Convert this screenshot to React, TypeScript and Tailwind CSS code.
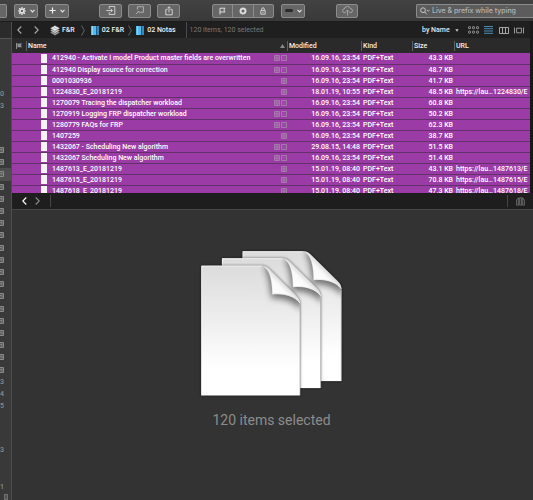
import { useState } from "react";
import type { ReactNode } from "react";

type Doc = {
  name: string;
  modified: string;
  size: string;
  url?: string;
  both: boolean;
};

const docs: Doc[] = [
  { name: "412940 - Activate I model Product master fields are overwritten", modified: "16.09.16, 23:54", size: "43.3 KB", both: true },
  { name: "412940 Display source for correction", modified: "16.09.16, 23:54", size: "48.7 KB", both: true },
  { name: "0001030936", modified: "16.09.16, 23:54", size: "41.7 KB", both: false },
  { name: "1224830_E_20181219", modified: "18.01.19, 10:55", size: "48.5 KB", url: "https://lau…1224830/E", both: false },
  { name: "1270079 Tracing the dispatcher workload", modified: "16.09.16, 23:54", size: "60.8 KB", both: true },
  { name: "1270919 Logging FRP dispatcher workload", modified: "16.09.16, 23:54", size: "50.2 KB", both: true },
  { name: "1280779 FAQs for FRP", modified: "16.09.16, 23:54", size: "62.3 KB", both: true },
  { name: "1407259", modified: "16.09.16, 23:54", size: "38.7 KB", both: false },
  { name: "1432067 - Scheduling New algorithm", modified: "29.08.15, 14:48", size: "51.5 KB", both: true },
  { name: "1432067 Scheduling New algorithm", modified: "16.09.16, 23:54", size: "51.4 KB", both: true },
  { name: "1487613_E_20181219", modified: "15.01.19, 08:40", size: "43.1 KB", url: "https://lau…1487613/E", both: false },
  { name: "1487615_E_20181219", modified: "15.01.19, 08:40", size: "70.8 KB", url: "https://lau…1487615/E", both: false },
  { name: "1487618_E_20181219", modified: "15.01.19, 08:40", size: "47.3 KB", url: "https://lau…1487618/E", both: false },
];

// "" is an empty row, "-" a short gap between sections, "icon" a group without a count
const sidebarRows: string[] = [
  "", "", "", "", "0", "3", "", "", "-",
  ...Array(19).fill("icon"),
  "3", "4", "5", "", "", "-", "3", "", "", "1", "-",
];
const activeRow = 11;

// ------------------------------
// Icons
// ------------------------------

const Chevron = () => (
  <svg width="5" height="4" viewBox="0 0 5 4" fill="none" stroke="#e6e6e6" strokeWidth="1.1">
    <path d="M.5 .8 2.5 2.9 4.5 .8" />
  </svg>
);

const Gear = () => (
  <svg width="8" height="8" viewBox="0 0 16 16" fill="none" stroke="#e8e8e8">
    <circle cx="8" cy="8" r="4" strokeWidth="3" />
    <path d="M8 0v3M8 13v3M0 8h3M13 8h3M2.3 2.3l2.2 2.2M11.5 11.5l2.2 2.2M2.3 13.7l2.2-2.2M11.5 4.5l2.2-2.2" strokeWidth="2.4" />
  </svg>
);

const Plus = () => (
  <svg width="7" height="7" viewBox="0 0 7 7" stroke="#f0f0f0" strokeWidth="1.2">
    <path d="M3.5 .4v6.2M.4 3.5h6.2" />
  </svg>
);

const ImportIcon = () => (
  <svg width="10" height="9" viewBox="0 0 10 9" fill="none" stroke="#d8d8d8" strokeWidth=".9">
    <path d="M3.2 2.8V.5h5.6v8H3.2V6.2M.3 4.5h6M4.7 2.8l1.8 1.7-1.8 1.7" />
  </svg>
);

const MoveIcon = () => (
  <svg width="9" height="9" viewBox="0 0 9 9" fill="none" stroke="#b8b8b8" strokeWidth=".9">
    <path d="M2.4 3.6V.7h6v5.6H5.2" />
    <path d="M.8 8.2 3.6 5.4" />
    <path d="M2.4 5.6h1.8v1.8" strokeWidth=".7" />
  </svg>
);

const ShareIcon = () => (
  <svg width="8" height="10" viewBox="0 0 8 10" fill="none" stroke="#dcdcdc" strokeWidth=".9">
    <path d="M2.4 3.6H.8v5.2h6.4V3.6H5.6M4 6.4V.8M2.3 2.4 4 .7l1.7 1.7" />
  </svg>
);

const FlagIcon = () => (
  <svg width="7" height="8" viewBox="0 0 7 8" fill="none" stroke="#dedede" strokeWidth="1">
    <path d="M1 7.5V1.2h5L4.9 3.1 6 5H1" />
  </svg>
);

const DotIcon = () => (
  <svg width="8" height="8" viewBox="0 0 8 8" fill="none" stroke="#dedede">
    <circle cx="4" cy="4" r="2.4" strokeWidth="1.7" />
    <circle cx="4" cy="4" r="3.5" strokeWidth=".5" strokeDasharray="1 .8" />
  </svg>
);

const LockIcon = () => (
  <svg width="6" height="8" viewBox="0 0 6 8" fill="none" stroke="#dedede" strokeWidth=".9">
    <path d="M.8 3.6h4.4v3.6H.8zM1.7 3.6V2.1a1.3 1.3 0 0 1 2.6 0v1.5M3 4.8v1.2" />
  </svg>
);

const CloudIcon = () => (
  <svg width="11" height="10" viewBox="0 0 11 10" fill="none" stroke="#b4b4b4" strokeWidth=".8">
    <path d="M3.8 6.6H2.5a1.9 1.9 0 0 1-.1-3.8 3.1 3.1 0 0 1 6-.2 2 2 0 0 1 .1 4H7.2M5.5 9.5V4.2M4 5.6l1.5-1.5L7 5.6" />
  </svg>
);

const StackIcon = () => (
  <svg width="10" height="11" viewBox="0 0 20 22">
    <path d="M0 15l10-4 10 4-10 6z" fill="#a8a8a8" stroke="#333" />
    <path d="M0 11l10-5 10 5-10 6z" fill="#cfcfcf" stroke="#333" />
    <path d="M0 6.5 10 1l10 5.5-10 6z" fill="#f4f4f4" stroke="#333" />
    <path d="M5 6.5h10M8 4.5l5 4" stroke="#999" />
  </svg>
);

const FolderIcon = () => (
  <svg width="8" height="9" viewBox="0 0 8 9">
    <rect width="5" height="9" fill="#55b9ee" />
    <rect x="1" width="1" height="9" fill="#8ad4f8" />
    <rect x="5" width="1" height="9" fill="#1f5f8c" />
    <rect x="6" width="2" height="9" fill="#3789b8" />
  </svg>
);

const Separator = () => (
  <svg width="4" height="11" viewBox="0 0 4 11" fill="none" stroke="#777" strokeWidth=".8">
    <path d="M.5 .5 3.3 5.5.5 10.5" />
  </svg>
);

const Arrow = ({ left, color }: { left?: boolean; color: string }) => (
  <svg width="5" height="8" viewBox="0 0 5 8" fill="none" stroke={color} strokeWidth="1.1">
    <path d={left ? "M4.3.5.8 4l3.5 3.5" : "M.7.5 4.2 4 .7 7.5"} />
  </svg>
);

const IconsView = () => (
  <svg width="11" height="8" viewBox="0 0 11 8" fill="none" stroke="#b0b0b0" strokeWidth=".8">
    {[0, 4, 8].map((x) => [0, 4.5].map((y) => <rect key={`${x}-${y}`} x={x + 0.5} y={y + 0.6} width="2" height="2.1" rx=".6" />))}
  </svg>
);

const ListView = () => (
  <svg width="9" height="8" viewBox="0 0 9 8" stroke="#4c8cb8" strokeWidth="1">
    <path d="M0 .5h9M0 2.7h9M0 5h9M0 7.3h9" />
  </svg>
);

const ColumnsView = () => (
  <svg width="10" height="7" viewBox="0 0 10 7" fill="none" stroke="#b5b5b5" strokeWidth=".9">
    <path d="M.5.5h9v6h-9zM3.5.5v6M6.5.5v6" />
  </svg>
);

const CoverView = () => (
  <svg width="10" height="7" viewBox="0 0 10 7" fill="none" stroke="#a8a8a8" strokeWidth=".9">
    <path d="M2.6 1.2h4.8v4.6H2.6zM.5.5v6M9.5.5v6" />
  </svg>
);

const Badge = ({ lines }: { lines?: boolean }) => (
  <svg width="6" height="6" viewBox="0 0 6 6" fill="none" stroke="#a58aa8" strokeWidth=".8">
    <path d="M.5.5h5v5h-5z" />
    <path d={lines ? "M1 2.2h4M1 3.9h4M3 .5v5" : "M1 3h4M3 1v4"} strokeWidth={lines ? ".8" : ".3"} />
  </svg>
);

const Page = ({ x, y }: { x: number; y: number }) => (
  <g transform={`translate(${x} ${y})`}>
    <path d="M33 78H215C226 78 233 84 241 92L318 168C326 176 329 182 329 194V467H33Z" fill="#111" opacity=".6" filter="url(#soft)" />
    <path d="M33 78H215C226 78 233 84 241 92L318 168C326 176 329 182 329 194V467H33Z" fill="url(#paper)" />
    <path d="M34 467V79H215M34 466H328" fill="none" stroke="#fff" strokeWidth="2" />
    <g clipPath="url(#sheet)">
      <path d="M222 84C236 105 238 140 244 176C278 174 312 186 334 212V150L240 70Z" fill="#000" opacity=".5" filter="url(#curlShadow)" />
    </g>
    <path d="M218 79C240 92 245 125 246 163C280 160 312 168 329 190C328 180 323 173 318 168L241 92C234 84 227 79 218 79Z" fill="url(#curl)" stroke="#c8c8c8" strokeWidth="1" />
    <path d="M246 163C280 160 312 168 329 190" fill="none" stroke="#fff" strokeWidth="2" />
    <path d="M329 194V467" stroke="#aaa" strokeWidth="2" />
  </g>
);

const PaperStack = () => (
  <svg width="150" height="152" viewBox="20 25 450 456">
    <defs>
      <linearGradient id="paper" x1="0" y1="0" x2="0" y2="1">
        <stop offset="0" stopColor="#dcdcdc" />
        <stop offset=".4" stopColor="#ededed" />
        <stop offset=".8" stopColor="#ffffff" />
      </linearGradient>
      <linearGradient id="curl" gradientUnits="userSpaceOnUse" x1="246" y1="163" x2="283" y2="126">
        <stop offset="0" stopColor="#ffffff" />
        <stop offset=".6" stopColor="#fafafa" />
        <stop offset="1" stopColor="#d4d4d4" />
      </linearGradient>
      <filter id="soft"><feGaussianBlur stdDeviation="4" /></filter>
      <filter id="curlShadow" x="-30%" y="-30%" width="160%" height="160%"><feGaussianBlur stdDeviation="9" /></filter>
      <clipPath id="sheet"><path d="M33 78H215C226 78 233 84 241 92L318 168C326 176 329 182 329 194V467H33Z" /></clipPath>
    </defs>
    <Page x={124} y={-43} />
    <Page x={62} y={-22} />
    <Page x={0} y={0} />
  </svg>
);

// ------------------------------
// Parts
// ------------------------------

const ToolButton = ({ label, className, children }: { label: string; className: string; children?: ReactNode }) => (
  <button
    aria-label={label}
    className={`flex h-[14px] shrink-0 items-center justify-center gap-1 rounded-[2px] border border-[#8c8c8c] bg-[#666666] ${className}`}
  >
    {children}
  </button>
);

const Toolbar = () => (
  <header className="flex h-[22px] items-center overflow-hidden border-b border-[#1c1c1c] bg-linear-to-b from-[#424242] to-[#393939]">
    <ToolButton label="Back" className="w-[7px] rounded-l-none border-l-0" />
    <ToolButton label="Actions" className="ml-[7px] w-6"><Gear /><Chevron /></ToolButton>
    <ToolButton label="Add" className="ml-[7px] w-6"><Plus /><Chevron /></ToolButton>
    <ToolButton label="Import" className="ml-[30px] w-[23px]"><ImportIcon /></ToolButton>
    <ToolButton label="Move" className="ml-[6px] w-[23px]"><MoveIcon /></ToolButton>
    <ToolButton label="Share" className="ml-[6px] w-[23px]"><ShareIcon /></ToolButton>
    <div className="ml-8 flex h-[14px] w-[62px] shrink-0 divide-x divide-[#8c8c8c] rounded-[2px] border border-[#8c8c8c] bg-[#666666]">
      <button aria-label="Flag" className="flex flex-1 items-center justify-center"><FlagIcon /></button>
      <button aria-label="Unread" className="flex flex-1 items-center justify-center"><DotIcon /></button>
      <button aria-label="Lock" className="flex flex-1 items-center justify-center"><LockIcon /></button>
    </div>
    <ToolButton label="Label" className="ml-[7px] w-6">
      <span className="h-[3px] w-2 rounded-full bg-[#2b2b2b]" />
      <Chevron />
    </ToolButton>
    <ToolButton label="Sync" className="ml-[31px] w-[22px]"><CloudIcon /></ToolButton>
    <label className="ml-[58px] flex h-[14px] flex-1 items-center rounded-l-[2px] border border-r-0 border-[#8c8c8c] bg-[#5c5c5c] pl-[3px]">
      <svg width="10" height="8" viewBox="0 0 10 8" className="shrink-0" fill="none" stroke="#d0d0d0" strokeWidth=".9">
        <circle cx="3" cy="3.2" r="2.4" />
        <path d="M4.7 5 6.8 7.3M7 3.1l1.2 1.2 1.2-1.2" />
      </svg>
      <input
        aria-label="Search"
        placeholder="Live & prefix while typing"
        className="ml-[2px] w-full min-w-0 bg-transparent font-['Inter','Liberation_Sans',sans-serif] text-[7px] leading-[10px] text-white outline-none placeholder:text-[#b4b4b4] placeholder:opacity-100"
      />
    </label>
  </header>
);

const Sidebar = () => (
  <aside className="flex w-3 shrink-0 flex-col border-r border-[#4e4e4e] bg-[#393939]">
    <div className="h-[17px] border-b border-[#565656] bg-[#2b2b2b]" />
    <ul className="flex flex-1 flex-col text-[7px] leading-3 text-[#8c8c8c]">
      {sidebarRows.map((row, i) => (
        <li
          key={i}
          className={`flex items-center justify-end ${row === "-" ? "flex-[3]" : "flex-[5]"} ${i === activeRow ? "bg-[#4f4f4f]" : ""} ${row === "-" ? "pr-[3px]" : "pr-[7px]"}`}
        >
          {row === "icon" ? (
            <svg width="6" height="6" viewBox="0 0 6 6" className="shrink-0" fill="#5c5c5c" stroke="#8a8a8a" strokeWidth="1">
              <path d="M.5.5h5v5h-5z" />
              <path d="M2 2.5h2v1.5" strokeWidth=".8" fill="none" />
            </svg>
          ) : row !== "-" && row}
          {i === sidebarRows.length - 1 && <span className="h-[6px] w-1 shrink-0 border border-[#707070] bg-[#555555]" />}
        </li>
      ))}
    </ul>
  </aside>
);

const PathBar = () => {
  const [sort, setSort] = useState("by Name");

  return (
    <nav className="flex h-4 items-center overflow-hidden bg-[#1f1f1f] pr-[6px] pl-[5px] whitespace-nowrap text-[#f0f0f0]">
      <button aria-label="Back"><Arrow left color="#a8a8a8" /></button>
      <button aria-label="Forward" className="ml-3"><Arrow color="#a8a8a8" /></button>
      <a href="#database" className="ml-[11px] flex items-center gap-[2px]"><StackIcon />F&amp;R</a>
      <span className="mx-[6px]"><Separator /></span>
      <a href="#group" className="flex items-center gap-[3px]"><FolderIcon />02 F&amp;R</a>
      <span className="mx-1"><Separator /></span>
      <a href="#notes" className="flex items-center gap-[3px]"><FolderIcon />02 Notas</a>
      <span className="ml-[10px] flex h-4 items-center border-l border-[#4a4a4a] pl-[3px] font-normal text-[#787878]">120 items, 120 selected</span>
      <label className="ml-auto flex items-center">
        <select
          aria-label="Sort"
          value={sort}
          onChange={(e) => setSort(e.target.value)}
          className="w-[33px] appearance-none bg-transparent text-[#e6e6e6] outline-none"
        >
          <option>by Name</option>
          <option>by Size</option>
        </select>
        <svg width="4" height="3" viewBox="0 0 4 3" fill="#d0d0d0"><path d="M.3.3h3.4L2 2.7z" /></svg>
      </label>
      <button aria-label="Icons" className="ml-[9px]"><IconsView /></button>
      <button aria-label="List" className="ml-[5px]"><ListView /></button>
      <button aria-label="Columns" className="ml-[6px]"><ColumnsView /></button>
      <button aria-label="Cover Flow" className="ml-[5px]"><CoverView /></button>
    </nav>
  );
};

const DocTable = () => (
  <div className="max-h-[155px] overflow-hidden">
    <table className="w-full table-fixed border-collapse whitespace-nowrap">
      <colgroup>
        <col className="w-[14px]" />
        <col />
        <col className="w-[74px]" />
        <col className="w-[51px]" />
        <col className="w-[42px]" />
        <col className="w-[76px]" />
      </colgroup>
      <thead className="bg-[#2a2a2a] text-left text-[#f0f0f0]">
        <tr className="h-[15px]">
          <th aria-label="Flag" className="p-0 pl-1">
            <svg width="6" height="6" viewBox="0 0 6 6" fill="#8f8f8f"><path d="M0 0h1v6H0zM1.4.4H6L5 2.3l1 1.9H1.4z" /></svg>
          </th>
          <th className="p-0 font-medium">
            <div className="flex items-center justify-between border-l border-[#606060] pr-[2px] pl-px">
              Name
              <svg width="5" height="4" viewBox="0 0 5 4" fill="#8a8a8a"><path d="M2.5 0 5 4H0z" /></svg>
            </div>
          </th>
          <th className="p-0 font-medium"><div className="border-l border-[#606060] pl-px">Modified</div></th>
          <th className="p-0 font-medium"><div className="border-l border-[#606060] pl-px">Kind</div></th>
          <th className="p-0 font-medium"><div className="border-l border-[#606060] pl-px">Size</div></th>
          <th className="p-0 font-medium"><div className="border-l border-[#606060] pl-px">URL</div></th>
        </tr>
      </thead>
      <tbody className="bg-[#9b3ba5] text-white">
        {docs.map((doc) => (
          <tr key={doc.name} className="h-[11px] border-b border-[#63306a]">
            <td className="p-0" />
            <td className="p-0 pl-[15px]">
              <div className="flex items-center">
                <span className="h-[9px] w-[6px] shrink-0 bg-[#f4f4f4]" />
                <span className="ml-[5px] flex-1 truncate">{doc.name}</span>
                <span className="flex gap-px">
                  {doc.both && <Badge lines />}
                  <Badge lines={!doc.both} />
                </span>
              </div>
            </td>
            <td className="p-0 pr-px text-right">{doc.modified}</td>
            <td className="p-0 pl-[2px]">PDF+Text</td>
            <td className="p-0 pr-px text-right">{doc.size}</td>
            <td className="overflow-hidden p-0 pl-[2px]">{doc.url}</td>
          </tr>
        ))}
      </tbody>
    </table>
  </div>
);

export default function App() {
  return (
    <div className="flex min-h-screen flex-col bg-[#333333] font-['Roboto','Liberation_Sans',sans-serif] text-[7px] leading-[10px] font-medium">
      <Toolbar />
      <div className="flex flex-1">
        <Sidebar />
        <main className="flex min-w-0 flex-1 flex-col">
          <div className="border-r-3 border-[#191919]">
            <PathBar />
            <DocTable />
          </div>
          <div className="flex h-[17px] items-center border-b border-[#474747] bg-[#1e1e1e] pr-2 pl-[10px]">
            <button aria-label="Previous"><Arrow left color="#ffffff" /></button>
            <button aria-label="Next" className="ml-2"><Arrow color="#8a8a8a" /></button>
            <span className="ml-[10px] h-3 border-l border-[#454545]" />
            <span className="ml-auto h-3 border-l border-[#454545]" />
            <button aria-label="Details" className="ml-2">
              <svg width="9" height="9" viewBox="0 0 9 9" fill="none" stroke="#777777" strokeWidth=".8">
                <path d="M2.4.7.6 3v5.2h1.8zM3.7.7h1.7v7.5H3.7zM6.7.7 8.4 3v5.2H6.7z" />
              </svg>
            </button>
          </div>
          <section className="flex flex-1 flex-col items-center pt-[38px] pr-[2px]">
            <PaperStack />
            <p className="mt-[10px] text-[14px] leading-5 font-normal text-[#8c8c8c]">120 items selected</p>
          </section>
        </main>
      </div>
    </div>
  );
}
